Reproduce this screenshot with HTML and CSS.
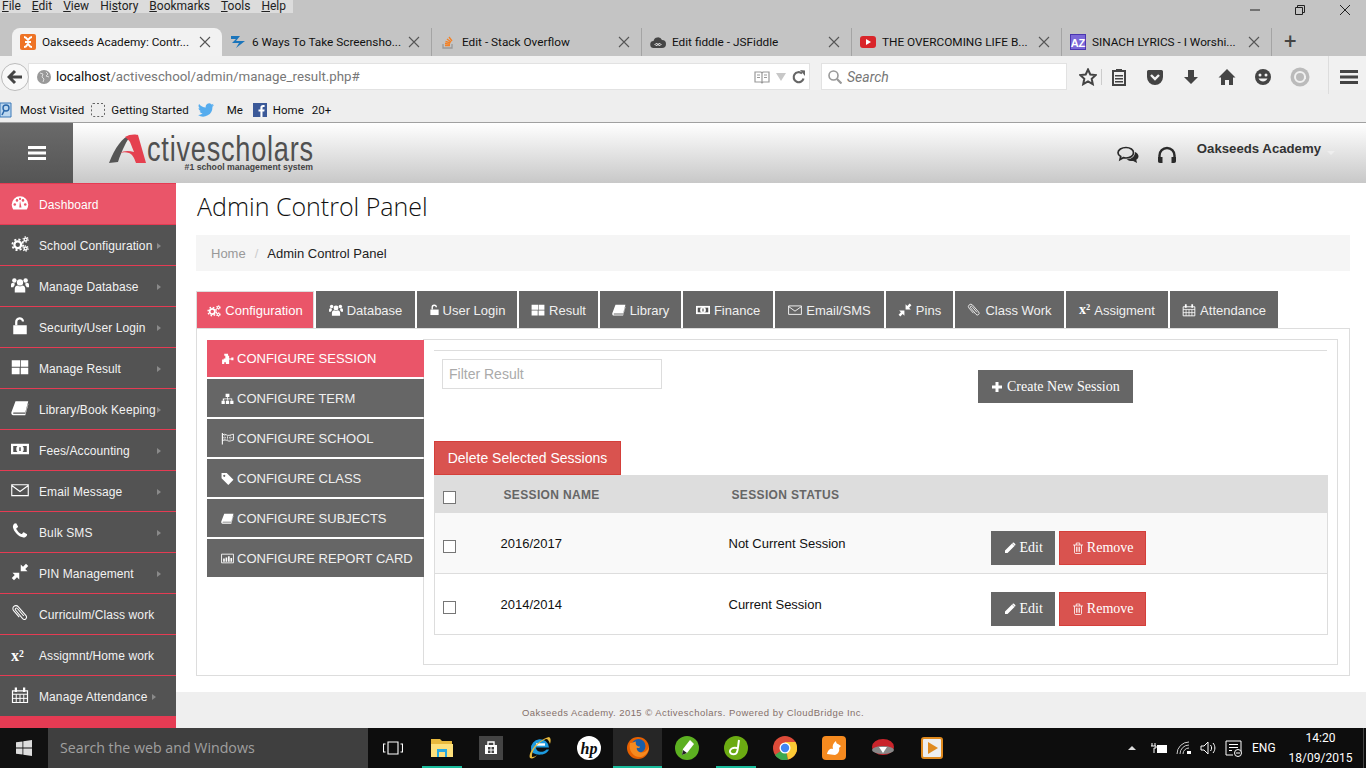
FILE: index.html
```html
<!DOCTYPE html>
<html lang="en">
<head>
  <meta charset="utf-8">
  <title>Oakseeds Academy: Control Panel</title>
  <link rel="stylesheet" href="styles.css">
</head>
<body>

<svg class="sprites" xmlns="http://www.w3.org/2000/svg">
  <symbol id="i-x" viewBox="0 0 12 12"><path d="M1 1l10 10M11 1L1 11" fill="none" stroke="currentColor" stroke-width="1.100"/></symbol>
  <symbol id="i-dash" viewBox="0 0 24 24"><path d="M12 3a11 11 0 0 0-11 11c0 2.500.8 4.700 2 6.500h18c1.200-1.800 2-4 2-6.500A11 11 0 0 0 12 3z" fill="currentColor"/><g fill="#ea5569"><circle cx="5" cy="14" r="1.700"/><circle cx="8" cy="8.500" r="1.700"/><circle cx="19" cy="14" r="1.700"/><circle cx="16" cy="8.500" r="1.700"/><circle cx="12" cy="6.500" r="1.500"/><path d="M11 18l1-9 2 9z"/></g></symbol>
  <symbol id="i-gears" viewBox="0 0 24 24"><g fill="none" stroke="currentColor"><circle cx="9" cy="13" r="4.500" stroke-width="3"/><circle cx="9" cy="13" r="7.200" stroke-width="2.400" stroke-dasharray="2.800 2.850"/><circle cx="19.500" cy="6" r="2" stroke-width="1.800"/><circle cx="19.500" cy="6" r="3.500" stroke-width="1.400" stroke-dasharray="1.800 1.850"/><circle cx="19.500" cy="18" r="2" stroke-width="1.800"/><circle cx="19.500" cy="18" r="3.500" stroke-width="1.400" stroke-dasharray="1.800 1.850"/></g></symbol>
  <symbol id="i-users" viewBox="0 0 24 24"><g fill="currentColor"><circle cx="12" cy="8.500" r="4.200"/><path d="M5 22v-5c0-3 2-4.500 4-4.500 1 .8 2 1.200 3 1.200s2-.4 3-1.200c2 0 4 1.500 4 4.500v5z"/><circle cx="4.500" cy="6" r="3"/><circle cx="19.500" cy="6" r="3"/><path d="M0 15v-3c0-2 1-3 3-3 .6.500 1 .8 2 .8-.3 1-.3 1.500 0 2.500-1 .7-1.500 1.500-1.700 2.700zM24 15v-3c0-2-1-3-3-3-.6.500-1 .8-2 .8.300 1 .3 1.500 0 2.500 1 .7 1.500 1.500 1.700 2.700z"/></g></symbol>
  <symbol id="i-unlock" viewBox="0 0 24 24"><path d="M3 11h18v12H3z" fill="currentColor"/><path d="M7 11V6.500a4.500 4.500 0 0 1 9-.5" fill="none" stroke="currentColor" stroke-width="3"/></symbol>
  <symbol id="i-th" viewBox="0 0 24 24"><path d="M1 3h10a1 1 0 0 1 1 0v8.500H1zM13 3h10v8.500H13zM1 13h10.500v8.500H1zM13 13h10v8.500H13z" fill="currentColor"/></symbol>
  <symbol id="i-book" viewBox="0 0 24 24"><path d="M6 3h17l-4 15H3.500c-.8 0-1 1.500 0 1.500H19l4-14v2l-4 14H3c-2 0-3-2-2.500-4z" fill="currentColor"/></symbol>
  <symbol id="i-money" viewBox="0 0 24 24"><path d="M0 5h24v14H0z" fill="currentColor"/><path d="M3 8h18v8H3z" fill="#535353"/><circle cx="12" cy="12" r="5" fill="currentColor"/><path d="M11 9.500h2v5h-2z" fill="#535353"/></symbol>
  <symbol id="i-mail" viewBox="0 0 24 24"><path d="M1 5h22v14.500H1zM1 6l11 8 11-8" fill="none" stroke="currentColor" stroke-width="1.500"/></symbol>
  <symbol id="i-phone" viewBox="0 0 1792 1792"><path d="M1600 1240q0 27-10 70.500t-21 68.500q-21 50-122 106-94 51-186 51-27 0-53-3.500t-57.500-12.500-47-14.500-55.500-20.500-49-18q-98-35-175-83-127-79-264-216t-216-264q-48-77-83-175-3-9-18-49t-20.500-55.500-14.500-47-12.500-57.500-3.500-53q0-92 51-186 56-101 106-122 25-11 68.500-21t70.500-10q14 0 21 3 18 6 53 76 11 19 30 54t35 63.500 31 53.500q3 4 17.500 25t21.500 35.500 7 28.500q0 20-28.500 50t-62 55-62 53-28.500 46q0 9 5 22.500t8.500 20.500 14 24 11.500 19q76 137 174 235t235 174q2 1 19 11.500t24 14 20.500 8.500 22.500 5q18 0 46-28.500t53-62 55-62 50-28.500q14 0 28.500 7t35.500 21.500 25 17.500q25 15 53.500 31t63.500 35 54 30q70 35 76 53 3 7 3 21z" fill="currentColor"/></symbol>
  <symbol id="i-pin" viewBox="0 0 24 24"><path d="M13 2v9h9l-3-3 4-4-3-3-4 4zM11 22v-9H2l3 3-4 4 3 3 4-4z" fill="currentColor"/></symbol>
  <symbol id="i-clip" viewBox="0 0 24 24"><path d="M17 16L8.500 6a1.600 1.600 0 0 0-2.500 2l9.500 11.500a3 3 0 0 0 4.500-4L9.500 3.500a4 4 0 0 0-6 5.300L11 17.500" fill="none" stroke="currentColor" stroke-width="1.400"/></symbol>
  <symbol id="i-cal" viewBox="0 0 24 24"><g fill="none" stroke="currentColor"><path d="M2 6.500h20V22H2z" stroke-width="1.600"/><path d="M2 11h20M7 11v11M12 11v11M17 11v11M2 16.500h20" stroke-width="1.300"/><path d="M6.500 2v6M17.500 2v6" stroke-width="3"/></g></symbol>
  <symbol id="i-puzzle" viewBox="0 0 24 24"><path d="M8 3h5v4h2v5h4v-2h4v5h-4v-1h-4v8H9v-3H6v3H2v-8h3v-2h3V7H6V3z" fill="currentColor"/></symbol>
  <symbol id="i-sitemap" viewBox="0 0 24 24"><g fill="currentColor"><path d="M8.500 3h7v6h-7zM1 16h6v6H1zM9 16h6v6H9zM17 16h6v6h-6z"/><path d="M3.300 16v-4h8v-3h1.400v3h8v4h-1.500v-2.500h-6v2.500h-1.400v-2.500h-6V16z"/></g></symbol>
  <symbol id="i-flag" viewBox="0 0 24 24"><g fill="none" stroke="currentColor"><path d="M2.500 2v21" stroke-width="2"/><path d="M3 5c5-3 8 3 13 1 2-.7 5-1.500 7-2v11c-5 1-7 3-11 1-3-1.500-6-2-9 0z" stroke-width="1.600"/><path d="M7 6v9M12 8v8M17 6v9M3 10.500h20" stroke-width="1.500" stroke-dasharray="2 2"/></g></symbol>
  <symbol id="i-tag" viewBox="0 0 24 24"><path d="M1 2h9.500L23 14.500 13.500 24 1 11.500zM6 5a2 2 0 1 0 .01 0z" fill="currentColor" fill-rule="evenodd"/></symbol>
  <symbol id="i-chart" viewBox="0 0 24 24"><path d="M1 4h22v16H1z" fill="none" stroke="currentColor" stroke-width="1.600"/><path d="M4 12h3v6H4zM8.500 10h3v8h-3zM13 8h3v10h-3zM17.500 11h3v7h-3z" fill="currentColor"/></symbol>
  <symbol id="i-plus" viewBox="0 0 24 24"><path d="M9 2h6v7h7v6h-7v7H9v-7H2V9h7z" fill="currentColor"/></symbol>
  <symbol id="i-pencil" viewBox="0 0 24 24"><path d="M2 17L16 3l5 5L7 22H2zM17.500 1.500a2 2 0 0 1 2.500 0l2.500 2.500a2 2 0 0 1 0 2.500l-1 1-5-5z" fill="currentColor"/></symbol>
  <symbol id="i-trash" viewBox="0 0 24 24"><g fill="none" stroke="currentColor" stroke-width="1.600"><path d="M2 6h20M5 6v15c0 1 .8 2 2 2h10c1.200 0 2-1 2-2V6M8.500 6V2h7v4"/><path d="M9 9.500v10M12 9.500v10M15 9.500v10"/></g></symbol>
</svg>

<div class="browser">
  <div class="menubar">
    <div class="menus">
      <span><u>F</u>ile</span><span><u>E</u>dit</span><span><u>V</u>iew</span><span>Hi<u>s</u>tory</span><span><u>B</u>ookmarks</span><span><u>T</u>ools</span><span><u>H</u>elp</span>
    </div>
    <div class="win-controls">
      <svg width="12" height="12" viewBox="0 0 12 12"><path d="M1 6h10" stroke="#222"/></svg>
      <svg width="12" height="12" viewBox="0 0 12 12"><path d="M1.500 3.500h7v7h-7zM3.500 3.500v-2h7v7h-2" fill="none" stroke="#222"/></svg>
      <svg width="12" height="12" viewBox="0 0 12 12"><path d="M1 1l10 10M11 1L1 11" stroke="#222"/></svg>
    </div>
  </div>

  <div class="tabbar">
    <div class="tab tab-active">
      <svg class="favicon" viewBox="0 0 16 16"><rect width="16" height="16" rx="2" fill="#ee7326"/><path d="M4 3c3 0 3 3 4 3s1-3 4-3M4 13c3 0 3-3 4-3s1 3 4 3M5 8h6" fill="none" stroke="#fff" stroke-width="2"/></svg>
      <span class="tab-title">Oakseeds Academy: Contr...</span><svg class="tab-close"><use href="#i-x"/></svg>
    </div>
    <div class="tab">
      <svg class="favicon" viewBox="0 0 16 16"><path d="M1 2h9L6 7h9l-9 7 3-5H2l4-4H1z" fill="#1b75bb"/></svg>
      <span class="tab-title">6 Ways To Take Screensho...</span><svg class="tab-close"><use href="#i-x"/></svg>
    </div>
    <div class="tab">
      <svg class="favicon" viewBox="0 0 16 16"><path d="M3 10v4h9v-4" fill="none" stroke="#999" stroke-width="1.300"/><path d="M5 11.500h5M5 9.500l5 .6M5.500 7.500l5 1.300M7 5l4 3M9 3l3 4" stroke="#f48024" stroke-width="1.300"/></svg>
      <span class="tab-title">Edit - Stack Overflow</span><svg class="tab-close"><use href="#i-x"/></svg>
    </div>
    <div class="tab">
      <svg class="favicon" viewBox="0 0 16 16"><path d="M4 14a3.500 3.500 0 0 1-.5-7A4.500 4.500 0 0 1 12 6a4 4 0 0 1 0 8z" fill="#444"/><path d="M5 10.500c1-1.500 2-1 3 0s2 1.500 3 0c-1-1.500-2-1-3 0s-2 1.500-3 0z" fill="none" stroke="#fff"/></svg>
      <span class="tab-title">Edit fiddle - JSFiddle</span><svg class="tab-close"><use href="#i-x"/></svg>
    </div>
    <div class="tab">
      <svg class="favicon" viewBox="0 0 16 16"><rect y="2" width="16" height="12" rx="3" fill="#d9252a"/><path d="M6 5l5 3-5 3z" fill="#fff"/></svg>
      <span class="tab-title">THE OVERCOMING LIFE B...</span><svg class="tab-close"><use href="#i-x"/></svg>
    </div>
    <div class="tab">
      <svg class="favicon" viewBox="0 0 16 16"><rect x=".5" y=".5" width="15" height="15" fill="#7b68d8" stroke="#4a35b0"/><text x="8" y="12.500" font-size="11" font-weight="700" font-family="Liberation Sans" text-anchor="middle" fill="#fff">AZ</text></svg>
      <span class="tab-title">SINACH LYRICS - I Worshi...</span><svg class="tab-close"><use href="#i-x"/></svg>
    </div>
    <span class="tab-new">+</span>
  </div>

  <div class="navbar">
    <div class="back-btn">
      <svg width="16" height="16" viewBox="0 0 16 16"><path d="M8 2L2 8l6 6M2.500 8H15" fill="none" stroke="#444" stroke-width="3"/></svg>
    </div>
    <div class="urlbar">
      <svg class="globe" width="14" height="14" viewBox="0 0 14 14"><circle cx="7" cy="7" r="7" fill="#999"/><path d="M3 3l3 1-1 3 2 2-1 3M9 2l2 2-2 2 3 1" fill="none" stroke="#ddd"/></svg>
      <span class="url"><span class="url-host">localhost</span>/activeschool/admin/manage_result.php#</span>
      <svg class="url-tool" width="16" height="14" viewBox="0 0 16 14"><path d="M1 2h6l1 1 1-1h6v10H9l-1 1-1-1H1zM8 3v9M3 5h3M3 7.500h3M10 5h3M10 7.500h3" fill="none" stroke="#999" stroke-width="1.200"/></svg>
      <svg class="url-tool" width="10" height="8" viewBox="0 0 10 8"><path d="M0 0h10L5 8z" fill="#c8c8c8"/></svg>
      <svg class="url-tool" width="14" height="14" viewBox="0 0 14 14"><path d="M11.500 8.500A5 5 0 1 1 10 3.500" fill="none" stroke="#666" stroke-width="2.200"/><path d="M8 0l5 .5V6z" fill="#666"/></svg>
    </div>
    <div class="searchbar">
      <svg width="14" height="14" viewBox="0 0 14 14"><circle cx="5.500" cy="5.500" r="4.500" fill="none" stroke="#999" stroke-width="1.600"/><path d="M9 9l4.500 4.500" stroke="#999" stroke-width="2.200"/></svg>
      <span>Search</span>
    </div>
    <div class="toolbar-icons">
      <svg width="18" height="18" viewBox="0 0 18 18"><path d="M9 1.500l2.300 5 5.400.6-4 3.700 1.100 5.400L9 13.500l-4.800 2.700 1.100-5.400-4-3.700 5.400-.6z" fill="none" stroke="#444" stroke-width="2"/></svg>
      <i class="tool-sep"></i>
      <svg width="16" height="18" viewBox="0 0 16 18"><path d="M2 3h12v14H2z" fill="none" stroke="#444" stroke-width="2"/><path d="M5 1h6v3H5zM4 7h8v1.500H4zM4 10h8v1.500H4zM4 13h8v1.500H4z" fill="#444"/></svg>
      <svg width="18" height="18" viewBox="0 0 18 18"><path d="M2.500 2h13A1.500 1.500 0 0 1 17 3.500V9A8 8 0 0 1 1 9V3.500A1.500 1.500 0 0 1 2.500 2z" fill="#444"/><path d="M5 7l4 4 4-4" fill="none" stroke="#f1f1f1" stroke-width="2.400"/></svg>
      <svg width="18" height="18" viewBox="0 0 18 18"><path d="M6 2h6v7h4l-7 7-7-7h4z" fill="#444"/></svg>
      <svg width="18" height="18" viewBox="0 0 18 18"><path d="M9 1l8.500 8.500H15V17h-4v-5H7v5H3V9.500H.5z" fill="#444"/></svg>
      <svg width="18" height="18" viewBox="0 0 18 18"><circle cx="9" cy="9" r="8" fill="#444"/><circle cx="6" cy="7" r="1.500" fill="#f1f1f1"/><circle cx="12" cy="7" r="1.500" fill="#f1f1f1"/><path d="M4.500 10.500c2 4 7 4 9 0z" fill="#f1f1f1"/></svg>
      <svg width="20" height="20" viewBox="0 0 20 20"><circle cx="10" cy="10" r="9.500" fill="#bbb"/><circle cx="10" cy="10" r="5" fill="none" stroke="#f1f1f1" stroke-width="2"/><path d="M15 9v3" stroke="#f1f1f1" stroke-width="2"/></svg>
    </div>
    <i class="tool-sep-tall"></i>
    <svg class="browser-menu" width="18" height="16" viewBox="0 0 18 16"><path d="M0 1h18v3H0zM0 6.500h18v3H0zM0 12h18v3H0z" fill="#444"/></svg>
  </div>

  <div class="bookmarks">
    <svg width="13" height="16" viewBox="0 0 13 16"><path d="M0 1h11v14H0z" fill="#bcd7ef" stroke="#3a78b8"/><circle cx="6" cy="6" r="3" fill="none" stroke="#2a66a8" stroke-width="1.400"/><path d="M4 9l-2 4" stroke="#2a66a8" stroke-width="1.500"/></svg>
    <span class="bm-text bm-first">Most Visited</span>
    <svg class="bm-icon" width="14" height="16" viewBox="0 0 14 16"><rect x=".5" y="1.500" width="13" height="13" rx="1.500" fill="none" stroke="#666" stroke-dasharray="2 2"/></svg>
    <span class="bm-text">Getting Started</span>
    <svg class="bm-icon bm-twitter" width="16" height="14" viewBox="0 0 16 14"><path d="M16 2c-.6.300-1.200.4-1.900.5.700-.4 1.200-1 1.400-1.800-.6.400-1.300.6-2 .8A3.300 3.300 0 0 0 7.800 4.500 9.300 9.300 0 0 1 1.100 1a3.300 3.300 0 0 0 1 4.400c-.5 0-1-.2-1.500-.4 0 1.600 1.100 2.900 2.600 3.200-.5.100-1 .2-1.500.1.400 1.300 1.600 2.200 3 2.300A6.600 6.600 0 0 1 0 12a9.300 9.300 0 0 0 14.400-8.300c.6-.5 1.200-1 1.600-1.700z" fill="#55acee"/></svg>
    <span class="bm-text bm-me">Me</span>
    <svg class="bm-icon" width="14" height="14" viewBox="0 0 14 14"><rect width="14" height="14" fill="#3b5998"/><path d="M9.500 14V8.500h1.800l.3-2.100H9.500V5c0-.6.200-1 1-1h1.100V2.100C11.400 2 10.800 2 10.100 2 8.500 2 7.400 3 7.400 4.700v1.700H5.500v2.100h1.900V14z" fill="#fff"/></svg>
    <span class="bm-text">Home</span>
    <span class="bm-text bm-count">20+</span>
  </div>
</div>

<div class="app">
  <header class="app-header">
    <div class="burger">
      <svg width="18" height="14" viewBox="0 0 18 14"><path d="M0 0h18v3H0zM0 5.500h18v3H0zM0 11h18v3H0z" fill="#fff"/></svg>
    </div>
    <div class="logo">
      <svg class="logo-mark" width="38" height="30" viewBox="0 0 38 30">
        <path d="M0 29C6 14 13 3 22 1c-4 5-9 15-13 27z" fill="#555"/>
        <path d="M16 3C20 0 27 0 29 1l8 28H27c-2-6-4-9-7-10-3-1-6-1-9 0 3-2 8-3 14-1L21 8c-1-2-3-3-5-5z" fill="#e5404f"/>
      </svg>
      <div class="logo-text">
        <span class="logo-name">ctivescholars</span>
        <span class="logo-sub">#1 school management system</span>
      </div>
    </div>
    <div class="header-right">
      <svg width="22" height="18" viewBox="0 0 22 18"><path d="M9 1.500c4.300 0 7.500 2.300 7.500 5.200S13.300 12 9 12c-1 0-1.800-.1-2.700-.3L3 13.500l.7-3C2 9.500 1 8.200 1 6.700 1 3.800 4.700 1.500 9 1.500z" fill="none" stroke="#2a2a2a" stroke-width="1.700"/><path d="M18 6c2 .9 3.500 2.500 3.500 4.300 0 1.400-.8 2.500-2.200 3.400l.7 3.300-3.800-2c-2.500.2-5-.4-6.700-1.800 4.700.4 8.500-2.700 8.500-7.200z" fill="#2a2a2a"/></svg>
      <svg class="hdr-phones" width="20" height="18" viewBox="0 0 20 18"><path d="M2.500 12V9.500a7.500 7.500 0 0 1 15 0V12" fill="none" stroke="#2a2a2a" stroke-width="2.400"/><path d="M1 11h4.500v6H3c-1.500 0-2-1-2-2zM19 11h-4.500v6H17c1.500 0 2-1 2-2z" fill="#2a2a2a"/></svg>
      <span class="hdr-user">Oakseeds Academy</span>
      <i class="hdr-caret"></i>
    </div>
  </header>

  <div class="app-body">
    <nav class="sidebar">
      <a class="nav-item nav-active"><svg class="nav-icon"><use href="#i-dash"/></svg><span>Dashboard</span></a>
      <a class="nav-item"><svg class="nav-icon"><use href="#i-gears"/></svg><span>School Configuration</span><i class="arrow"></i></a>
      <a class="nav-item"><svg class="nav-icon"><use href="#i-users"/></svg><span>Manage Database</span><i class="arrow"></i></a>
      <a class="nav-item"><svg class="nav-icon"><use href="#i-unlock"/></svg><span>Security/User Login</span><i class="arrow"></i></a>
      <a class="nav-item"><svg class="nav-icon"><use href="#i-th"/></svg><span>Manage Result</span><i class="arrow"></i></a>
      <a class="nav-item"><svg class="nav-icon"><use href="#i-book"/></svg><span>Library/Book Keeping</span><i class="arrow"></i></a>
      <a class="nav-item"><svg class="nav-icon"><use href="#i-money"/></svg><span>Fees/Accounting</span><i class="arrow"></i></a>
      <a class="nav-item"><svg class="nav-icon"><use href="#i-mail"/></svg><span>Email Message</span><i class="arrow"></i></a>
      <a class="nav-item"><svg class="nav-icon"><use href="#i-phone"/></svg><span>Bulk SMS</span><i class="arrow"></i></a>
      <a class="nav-item"><svg class="nav-icon"><use href="#i-pin"/></svg><span>PIN Management</span><i class="arrow"></i></a>
      <a class="nav-item"><svg class="nav-icon"><use href="#i-clip"/></svg><span>Curriculm/Class work</span></a>
      <a class="nav-item"><b class="nav-sup">x&sup2;</b><span>Assigmnt/Home work</span></a>
      <a class="nav-item"><svg class="nav-icon"><use href="#i-cal"/></svg><span>Manage Attendance</span><i class="arrow arrow-near"></i></a>
    </nav>

    <main class="main">
      <div class="content">
        <h1 class="page-title">Admin Control Panel</h1>
        <div class="breadcrumb"><span class="crumb-home">Home</span><span class="crumb-sep">/</span><span>Admin Control Panel</span></div>

        <div class="tabs">
          <a class="top-tab top-tab-active"><svg class="tab-icon"><use href="#i-gears"/></svg>Configuration</a>
          <a class="top-tab"><svg class="tab-icon"><use href="#i-users"/></svg>Database</a>
          <a class="top-tab"><svg class="tab-icon tab-icon-sm"><use href="#i-unlock"/></svg>User Login</a>
          <a class="top-tab"><svg class="tab-icon"><use href="#i-th"/></svg>Result</a>
          <a class="top-tab"><svg class="tab-icon"><use href="#i-book"/></svg>Library</a>
          <a class="top-tab"><svg class="tab-icon"><use href="#i-money"/></svg>Finance</a>
          <a class="top-tab"><svg class="tab-icon"><use href="#i-mail"/></svg>Email/SMS</a>
          <a class="top-tab"><svg class="tab-icon"><use href="#i-pin"/></svg>Pins</a>
          <a class="top-tab"><svg class="tab-icon"><use href="#i-clip"/></svg>Class Work</a>
          <a class="top-tab"><b class="tab-sup">x&sup2;</b>Assigment</a>
          <a class="top-tab"><svg class="tab-icon"><use href="#i-cal"/></svg>Attendance</a>
        </div>

        <section class="panel">
          <div class="side-tabs">
            <a class="side-tab side-active"><svg class="side-icon"><use href="#i-puzzle"/></svg>CONFIGURE SESSION</a>
            <a class="side-tab"><svg class="side-icon"><use href="#i-sitemap"/></svg>CONFIGURE TERM</a>
            <a class="side-tab"><svg class="side-icon"><use href="#i-flag"/></svg>CONFIGURE SCHOOL</a>
            <a class="side-tab"><svg class="side-icon"><use href="#i-tag"/></svg>CONFIGURE CLASS</a>
            <a class="side-tab"><svg class="side-icon"><use href="#i-book"/></svg>CONFIGURE SUBJECTS</a>
            <a class="side-tab"><svg class="side-icon"><use href="#i-chart"/></svg>CONFIGURE REPORT CARD</a>
          </div>

          <div class="tab-content">
            <hr class="rule">
            <div class="filter-row">
              <input class="filter" type="text" placeholder="Filter Result">
              <button class="btn btn-grey btn-create"><svg class="btn-icon"><use href="#i-plus"/></svg>Create New Session</button>
            </div>
            <button class="btn-delete">Delete Selected Sessions</button>
            <table class="sessions">
              <colgroup><col class="col-check"><col class="col-name"><col class="col-status"><col></colgroup>
              <thead>
                <tr><th><input type="checkbox"></th><th>SESSION NAME</th><th>SESSION STATUS</th><th></th></tr>
              </thead>
              <tbody>
                <tr>
                  <td><input type="checkbox"></td><td>2016/2017</td><td>Not Current Session</td>
                  <td class="actions"><button class="btn btn-grey"><svg class="btn-icon"><use href="#i-pencil"/></svg>Edit</button><button class="btn btn-red"><svg class="btn-icon"><use href="#i-trash"/></svg>Remove</button></td>
                </tr>
                <tr>
                  <td><input type="checkbox"></td><td>2014/2014</td><td>Current Session</td>
                  <td class="actions"><button class="btn btn-grey"><svg class="btn-icon"><use href="#i-pencil"/></svg>Edit</button><button class="btn btn-red"><svg class="btn-icon"><use href="#i-trash"/></svg>Remove</button></td>
                </tr>
              </tbody>
            </table>
          </div>
        </section>
      </div>
      <footer class="page-footer">Oakseeds Academy. 2015 &copy; Activescholars. Powered by CloudBridge Inc.</footer>
    </main>
  </div>
</div>

<div class="taskbar">
  <div class="start">
    <svg width="16" height="16" viewBox="0 0 16 16"><path d="M0 2.300l6.500-.9v6.200H0zM7.300 1.300L16 0v7.600H7.300zM0 8.400h6.500v6.200L0 13.700zM7.300 8.400H16V16l-8.700-1.300z" fill="#ddd"/></svg>
  </div>
  <div class="task-search">Search the web and Windows</div>
  <div class="task-btn">
    <svg width="20" height="14" viewBox="0 0 20 14"><path d="M5 1h10v12H5zM2.500 3H.5v8h2M17.500 3h2v8h-2" fill="none" stroke="#fff" stroke-width="1.100"/></svg>
  </div>
  <div class="task-btn task-open">
    <svg width="22" height="20" viewBox="0 0 22 20"><path d="M0 1h9l2 2h10v15H0z" fill="#e8b93d"/><path d="M0 6h22v13H0z" fill="#fde07b"/><path d="M6 11h10v8h-2v-5H8v5H6z" fill="#27a9e1"/></svg>
  </div>
  <div class="task-btn">
    <svg width="24" height="24" viewBox="0 0 24 24"><rect width="24" height="24" fill="#444"/><path d="M6 9h12v9H6z" fill="#fff"/><path d="M9 9V6h6v3" fill="none" stroke="#fff" stroke-width="1.400"/><path d="M9 11h2.500v2.500H9zM12.500 11H15v2.500h-2.500zM9 14.500h2.500V17H9zM12.500 14.500H15V17h-2.500z" fill="#444"/></svg>
  </div>
  <div class="task-btn">
    <svg width="24" height="24" viewBox="0 0 24 24"><path d="M3 13a9 9 0 0 1 18-1.500H8c0 4.500 7 6 10.500 2H21c-3 7.500-18 6.500-18-.5z" fill="#1d9ade"/><path d="M8 8.500h9" stroke="#fff" stroke-width="2.400"/><path d="M2 22C0 17 8 5 21 1c2 1 2 4 1 7-1-3-2-5-4-5C10 6 3 15 4 21c2 0 4-1 5-2-2 3-5 4-7 3z" fill="#e8b93d"/></svg>
  </div>
  <div class="task-btn">
    <svg width="24" height="24" viewBox="0 0 24 24"><circle cx="12" cy="12" r="12" fill="#fff"/><text x="12" y="17.500" font-size="16" font-weight="700" font-style="italic" font-family="Liberation Serif" text-anchor="middle" fill="#0d0d0d">hp</text></svg>
  </div>
  <div class="task-btn task-current">
    <svg width="24" height="24" viewBox="0 0 24 24"><circle cx="12" cy="12" r="11" fill="#e66000"/><circle cx="12.500" cy="10" r="7" fill="#1a5ea8"/><path d="M4 7c-2 8 4 15 11 14 5-1 8-6 8-10-2 4-5 6-8 5.500-3-.5-5-3-4-5 1.500 1 3 .5 3-1-3 0-5-2-4-5-3 .5-5 2-6 1.500z" fill="#f58a1f"/></svg>
  </div>
  <div class="task-btn">
    <svg width="24" height="24" viewBox="0 0 24 24"><circle cx="12" cy="12" r="12" fill="#5cb021"/><path d="M7 19l1-6 7-9 4 4-7 9z" fill="#fff"/><path d="M7 19l1-5 4 3z" fill="#222"/></svg>
  </div>
  <div class="task-btn task-open">
    <svg width="24" height="24" viewBox="0 0 24 24"><circle cx="12" cy="12" r="12" fill="#6bab12"/><path d="M15 4c-1 6-1 10-2 12-1 3-6 3-7 0-.5-3 3-5 7-4" fill="none" stroke="#fff" stroke-width="2"/></svg>
  </div>
  <div class="task-btn">
    <svg width="24" height="24" viewBox="0 0 24 24"><circle cx="12" cy="12" r="12" fill="#dd4b39"/><path d="M12 12L2 19a12 12 0 0 0 13 4.600z" fill="#3ba84f"/><path d="M12 6h10.500A12 12 0 0 1 15 23.600z" fill="#fcc934"/><circle cx="12" cy="12" r="5.500" fill="#fff"/><circle cx="12" cy="12" r="4.200" fill="#4285f4"/></svg>
  </div>
  <div class="task-btn">
    <svg width="24" height="24" viewBox="0 0 24 24"><rect width="24" height="24" rx="4" fill="#f58a1f"/><path d="M5 18c1-5 4-6 6-5-1-3 0-6 3-8 0 2 1 3 2 3l3 2-2 2c1 3-1 6-4 7z" fill="#fff"/></svg>
  </div>
  <div class="task-btn">
    <svg width="24" height="20" viewBox="0 0 24 20"><ellipse cx="12" cy="9" rx="11" ry="8" fill="#c9242b"/><ellipse cx="12" cy="12" rx="11" ry="4" fill="#888"/><path d="M8 9h8l-4 6z" fill="#fff"/></svg>
  </div>
  <div class="task-btn">
    <svg width="22" height="22" viewBox="0 0 22 22"><rect x="1" y="1" width="20" height="20" rx="2" fill="#eee" stroke="#e08a1e" stroke-width="2"/><path d="M7 5l10 6-10 6z" fill="#e08a1e"/></svg>
  </div>

  <div class="tray">
    <i class="tray-caret"></i>
    <svg width="17" height="12" viewBox="0 0 17 12"><path d="M6 3h10v8H6z" fill="#fff"/><path d="M1 1v3M4 1v3M0 4h5v2H3v5" fill="none" stroke="#fff"/></svg>
    <svg width="16" height="14" viewBox="0 0 16 14"><path d="M1 13A12 12 0 0 1 13 1M4 13a9 9 0 0 1 9-9M7 13a6 6 0 0 1 6-6" fill="none" stroke="#ccc"/><path d="M11 10h4v3h-4z" fill="#fff"/></svg>
    <svg width="17" height="14" viewBox="0 0 17 14"><path d="M1 5h3l4-4v12l-4-4H1zM10.500 4c1.500 2 1.500 4 0 6M13 2c2.500 3 2.500 7 0 10" fill="none" stroke="#fff"/></svg>
    <svg width="18" height="17" viewBox="0 0 18 17"><path d="M1 1h15v11h-4M8 15H1V1M4 4.500h9M4 7.500h9M4 10.500h3" fill="none" stroke="#fff"/><circle cx="13" cy="13" r="3.500" fill="#0d0d0d" stroke="#fff"/><path d="M11 13h4" stroke="#fff"/></svg>
    <span class="tray-lang">ENG</span>
    <div class="clock"><span>14:20</span><span>18/09/2015</span></div>
    <i class="show-desktop"></i>
  </div>
</div>

</body>
</html>
```

FILE: styles.css
```css
* { box-sizing: border-box; }

html, body { margin: 0; padding: 0; }

body {
  width: 1366px;
  height: 768px;
  overflow: hidden;
  display: flex;
  flex-direction: column;
  font-family: "Liberation Sans", Arial, sans-serif;
  font-size: 13px;
  color: #222;
  background: #fff;
}

.sprites { display: none; }

/* browser chrome */
.browser { flex: none; height: 123px; background: #c4c4c4; border-bottom: 1px solid #a0a0a0; font-family: Roboto, sans-serif; }

.menubar { height: 28px; display: flex; justify-content: space-between; align-items: flex-start; }
.menus { height: 13px; width: 293px; background: #dcdcdc; display: flex; gap: 11px; padding-left: 2px; font-size: 12px; line-height: 13px; }
.win-controls { display: flex; gap: 33px; padding: 4px 15px 0 0; }

.tabbar { height: 28px; display: flex; padding-left: 12px; }
.tab { width: 210px; height: 28px; display: flex; align-items: center; padding-left: 8px; position: relative; font-size: 11.800px; color: #111; border-right: 1px solid #a4a4a4; }
.tab-active { background: #f2f2f2; border-right: 0; border-radius: 8px 8px 0 0; }
.favicon { width: 16px; height: 16px; flex: none; }
.tab-title { margin-left: 6px; white-space: nowrap; }
.tab-close { width: 12px; height: 12px; margin-left: auto; margin-right: 11px; flex: none; color: #555; }
.tab-new { margin-left: 12px; font-size: 22px; line-height: 28px; color: #444; }

.navbar { height: 34px; background: #f1f1f1; display: flex; align-items: center; padding: 7px 0 0 1px; }
.back-btn { width: 28px; height: 28px; flex: none; border: 1px solid #bbb; border-radius: 50%; background: #f8f8f8; display: flex; align-items: center; justify-content: center; position: relative; z-index: 1; }
.urlbar { width: 782px; height: 27px; margin-left: -1px; background: #fff; border: 1px solid #e2e2e2; display: flex; align-items: center; padding: 0 3px 0 8px; }
.globe { flex: none; }
.url { margin-left: 5px; font-size: 13.300px; color: #777; white-space: nowrap; flex: 1; }
.url-host { color: #111; }
.url-tool { margin-left: 6px; flex: none; }
.searchbar { width: 246px; height: 27px; margin-left: 11px; background: #fff; border: 1px solid #e2e2e2; display: flex; align-items: center; gap: 5px; padding-left: 6px; font-size: 14px; font-style: italic; color: #777; }
.toolbar-icons { display: flex; align-items: center; gap: 18px; margin-left: 12px; }
.toolbar-icons svg:nth-of-type(n+3) { transform: translateX(1px); }
.tool-sep { width: 1px; height: 16px; background: #ccc; margin: 0 -9px 0 -14px; }
.tool-sep-tall { width: 1px; height: 38px; background: #ddd; margin: 0 0 0 19px; align-self: flex-start; margin-top: -7px; }
.browser-menu { margin-left: 11px; }

.bookmarks { height: 32px; background: #eee; display: flex; align-items: center; font-size: 11.500px; color: #111; padding-top: 8px; }
.bm-text { margin-left: 6px; white-space: nowrap; }
.bm-first { margin-left: 7px; }
.bm-icon { margin-left: 7px; flex: none; }
.bm-twitter { margin-left: 9px; }
.bm-me { margin-left: 13px; margin-right: 3px; }
.bm-count { margin-left: 8px; }

/* app header */
.app { flex: 1; min-height: 0; display: flex; flex-direction: column; }
.app-header { flex: none; height: 60px; display: flex; background: linear-gradient(#fff, #c8c8c8); }
.burger { width: 73px; background: linear-gradient(#6a6a6a, #555); display: flex; align-items: center; justify-content: center; }
.logo { display: flex; align-items: flex-end; margin-left: 36px; padding-bottom: 11px; }
.logo-mark { flex: none; margin-bottom: 8px; }
.logo-text { width: 166px; display: flex; flex-direction: column; }
.logo-name { font-size: 35px; line-height: 27px; color: #505050; letter-spacing: 1px; white-space: nowrap; transform: scaleX(.775); transform-origin: left; }
.logo-sub { font-size: 8.700px; font-weight: 700; line-height: 10px; color: #444; white-space: nowrap; text-align: right; }
.header-right { margin-left: auto; display: flex; align-items: flex-start; padding: 23px 31px 0 0; }
.hdr-phones { margin-left: 18px; }
.hdr-user { margin: -5px 0 0 20px; font-size: 13.200px; font-weight: 700; color: #333; }
.hdr-caret { margin: 5px 0 0 6px; border: 4px solid transparent; border-top-color: #eee; }

.app-body { flex: 1; min-height: 0; display: flex; }

/* sidebar */
.sidebar { width: 176px; flex: none; background: #e53b53; padding-top: 1px; }
.nav-item { height: 41px; display: flex; align-items: center; padding: 1px 15px 0 11px; background: #535353; border-bottom: 1px solid #e53b53; color: #f2f2f2; font-size: 12px; white-space: nowrap; letter-spacing: .1px; }
.nav-active { background: #ea5569; color: #fff; }
.nav-icon { width: 18px; height: 18px; flex: none; margin-right: 10px; color: #fff; margin-top: -3px; }
.nav-sup { width: 18px; margin-right: 10px; font-family: "Liberation Serif", serif; font-size: 16px; color: #fff; }
.arrow { margin-left: auto; border: 3px solid transparent; border-left: 4px solid #8a8a8a; border-right: 0; }
.arrow-near { margin-left: 5px; }

/* main content */
.main { flex: 1; min-width: 0; display: flex; flex-direction: column; }
.content { flex: 1; padding: 0 16px 0 20px; }
.page-title { margin: 0; height: 52px; padding-left: 1px; font-family: "Open Sans", sans-serif; font-size: 25px; font-weight: 300; line-height: 47px; color: #111; }
.breadcrumb { height: 36px; background: #f5f5f5; display: flex; align-items: center; padding-left: 15px; font-size: 13px; color: #222; }
.crumb-home { color: #999; }
.crumb-sep { margin: 0 9px; color: #ccc; }

.tabs { margin-top: 20px; height: 37px; display: grid; grid-template-columns: 118px 99px 100px 79px 81px 90px 109px 67px 109px 102px 108px; gap: 2px; }
.top-tab { display: flex; align-items: center; justify-content: center; padding-top: 1px; background: #666; color: #f0f0f0; font-size: 13px; white-space: nowrap; }
.top-tab-active { background: #ea5569; border: 1px solid #ddd; border-bottom: 0; color: #fff; }
.tab-icon { width: 14px; height: 14px; margin-right: 4px; flex: none; color: #fff; }
.tab-icon-sm { width: 11px; margin-right: 3px; }
.tab-sup { margin-right: 4px; font-family: "Liberation Serif", serif; font-size: 14px; color: #fff; }

.panel { height: 348px; border: 1px solid #ddd; margin-top: 0; padding: 10px 11px 10px 10px; display: flex; }
.side-tabs { width: 217px; flex: none; display: flex; flex-direction: column; gap: 2px; padding-top: 1px; position: relative; z-index: 1; }
.side-tab { height: 38px; display: flex; align-items: center; padding-left: 14px; background: #666; color: #f0f0f0; font-size: 13px; white-space: nowrap; }
.side-active { height: 37px; background: #ea5569; color: #fff; }
.side-icon { width: 13px; height: 13px; margin-right: 3px; flex: none; color: #fff; }

.tab-content { flex: 1; min-width: 0; margin-left: -1px; border: 1px solid #ddd; padding: 10px 10px 0; }
.rule { margin: 0; border: 0; border-top: 1px solid #ddd; }
.filter-row { height: 90px; display: flex; align-items: flex-start; padding: 8px 0 0 8px; }
.filter { width: 220px; height: 30px; border: 1px solid #ddd; padding: 0 6px; font: 14px "Liberation Sans", sans-serif; color: #999; }
.filter::placeholder { color: #aaa; }
.btn { height: 34px; display: inline-flex; align-items: center; border: 0; padding: 0 13px; color: #fff; font-family: "Liberation Serif", serif; font-size: 14px; white-space: nowrap; }
.btn-grey { background: #666; }
.btn-red { background: #d9534f; border: 1px solid #d43f3a; margin-left: 4px; padding: 0 11px 0 12px; }
.btn-create { height: 33px; margin: 11px 0 0 316px; }
.btn-icon { width: 12px; height: 12px; margin-right: 4px; flex: none; color: #fff; }
.btn-red .btn-icon { margin-right: 3px; }
.btn-delete { display: block; width: 187px; height: 34px; padding: 0; background: #d9534f; border: 1px solid #d43f3a; color: #fff; font: 14px "Liberation Sans", sans-serif; }

.sessions { width: 894px; table-layout: fixed; border-collapse: collapse; border: 1px solid #ddd; border-top: 0; font-size: 13px; color: #111; }
.col-check { width: 58px; }
.col-name { width: 228px; }
.col-status { width: 262px; }
.sessions th { height: 38px; background: #ddd; padding: 2px 0 0 11px; text-align: left; font-size: 12px; color: #666; letter-spacing: .35px; }
.sessions th:first-child, .sessions td:first-child { padding-left: 8px; }
.sessions td { height: 60px; padding: 2px 0 0 8px; border-bottom: 1px solid #ddd; }
.sessions tbody tr:first-child { background: #f9f9f9; }
.sessions tbody tr:last-child td { height: 61px; }
.sessions td.actions { padding-top: 10px; }
.actions .btn { vertical-align: middle; padding-top: 1px; }
.actions .btn-grey { padding-right: 12px; }
.sessions input[type="checkbox"] { appearance: none; width: 13px; height: 13px; margin: 6px 0 0; border: 1px solid #767676; background: #fff; vertical-align: middle; }
.sessions th input[type="checkbox"] { margin-top: 4px; }

.page-footer { flex: none; height: 36px; background: #efefef; display: flex; align-items: center; padding: 5px 0 0 346px; font-size: 9.500px; letter-spacing: .45px; color: #85706a; }

/* windows taskbar */
.taskbar { flex: none; height: 40px; background: #0d0d0d; display: flex; color: #fff; }
.start { width: 48px; background: #111; display: flex; align-items: center; justify-content: center; }
.task-search { width: 320px; background: #3f3f3f; color: #a0a0a0; font: 14.200px "Open Sans", sans-serif; line-height: 40px; padding-left: 12px; }
.task-btn { width: 49px; display: flex; align-items: center; justify-content: center; }
.task-open { background: linear-gradient(#1abc9c, #1abc9c) center bottom / 40px 2px no-repeat; }
.task-current { background: #262626; box-shadow: inset 0 -2px 0 #1abc9c; }
.tray { flex: 1; display: flex; align-items: center; padding-left: 172px; gap: 8px; font-family: Roboto, sans-serif; font-size: 12px; }
.tray-caret { border: 4px solid transparent; border-bottom: 4px solid #ddd; border-top: 0; margin-right: 7px; }
.tray-lang { margin-left: 1px; }
.clock { margin-left: 5px; display: flex; flex-direction: column; align-items: center; line-height: 20px; }
.show-desktop { width: 1px; height: 40px; background: #444; margin-left: 3px; }
```
